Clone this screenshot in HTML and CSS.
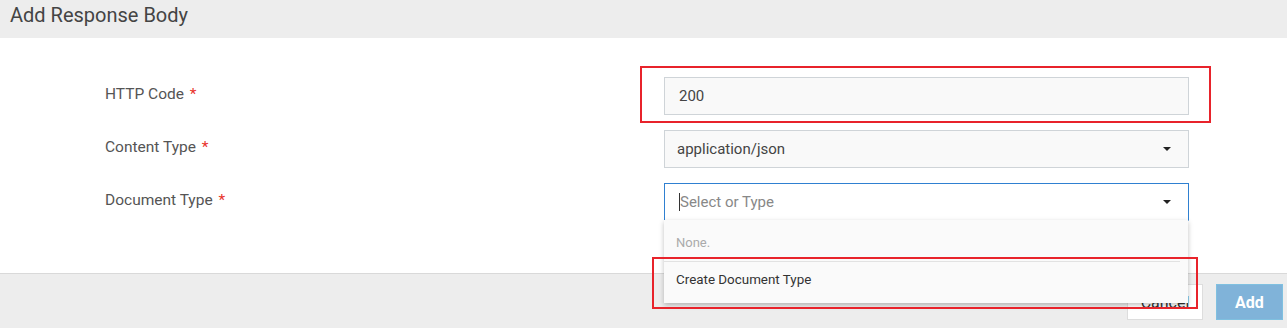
FILE: index.html
```html
<!DOCTYPE html>
<html>
<head>
<meta charset="UTF-8">
<title>Add Response Body</title>
<link rel="stylesheet" href="styles.css">
</head>
<body>
	<div class="modal">
		<div class="modalHeader">Add Response Body</div>
		<div class="modalBody">
			<div class="formRow">
				<label class="fieldLabel">HTTP Code <span class="required">*</span></label>
				<div class="field">
					<div class="textBox">200</div>
					<div class="markBox markCode"></div>
				</div>
			</div>
			<div class="formRow">
				<label class="fieldLabel">Content Type <span class="required">*</span></label>
				<div class="field">
					<div class="textBox selectBox">
						<span>application/json</span>
						<span class="caret"></span>
					</div>
				</div>
			</div>
			<div class="formRow">
				<label class="fieldLabel">Document Type <span class="required">*</span></label>
				<div class="field">
					<div class="textBox selectBox focused">
						<span class="placeholder"><span class="cursor"></span>Select or Type</span>
						<span class="caret"></span>
					</div>
					<div class="dropdown">
						<div class="dropItem emptyItem">None.</div>
						<div class="dropItem createItem">Create Document Type</div>
					</div>
					<div class="markBox markCreate"></div>
				</div>
			</div>
		</div>
		<div class="modalFooter">
			<button class="btn btnCancel">Cancel</button>
			<button class="btn btnAdd">Add</button>
		</div>
	</div>
</body>
</html>
```

FILE: styles.css
```css
body {
	margin: 0px;
	font-family: Roboto, "Liberation Sans", sans-serif;
	background-color: #ededed;
	overflow: hidden;
}

.modal {
	width: 1287px;
	height: 328px;
}

.modalHeader {
	height: 38px;
	padding-left: 10px;
	line-height: 30px;
	font-size: 20px;
	color: #444;
	background-color: #ededed;
}

.modalBody {
	background-color: #fff;
	height: 196px;
	padding-top: 39px;
	border-bottom: 1px solid #d9d9d9;
	display: flex;
	flex-direction: column;
	gap: 15px;
}

.formRow {
	display: grid;
	grid-template-columns: 559px 525px;
	padding-left: 105px;
}

.fieldLabel {
	font-size: 15.5px;
	color: #555;
	padding-top: 8px;
}

.required {
	color: #e8322b;
	margin-left: 2px;
}

.field {
	position: relative;
}

.textBox {
	height: 36px;
	border: 1px solid #cfd4d8;
	background-color: #f9f9f9;
	font-size: 15px;
	color: #444;
	padding-left: 14px;
	line-height: 37px;
}

.selectBox {
	display: flex;
	justify-content: space-between;
	align-items: center;
	padding-left: 12px;
	padding-right: 17px;
}

.focused {
	background-color: #fff;
	border-color: #2f80d1;
	border-bottom-color: #e3e3e3;
	padding-left: 14px;
}

.placeholder {
	color: #888;
	display: flex;
	align-items: center;
}

.cursor {
	width: 1px;
	height: 18px;
	background-color: #333;
}

.caret {
	width: 0px;
	height: 0px;
	border-left: 4px solid transparent;
	border-right: 4px solid transparent;
	border-top: 4px solid #222;
}

.dropdown {
	position: absolute;
	top: 37px;
	left: 0px;
	width: 524px;
	background-color: #fafafa;
	box-shadow: 0px 2px 5px rgba(0, 0, 0, 0.25);
	z-index: 2;
}

.dropItem {
	font-size: 13px;
	padding-left: 12px;
}

.emptyItem {
	color: #aaa;
	height: 41px;
	line-height: 46px;
	margin-right: 8px;
	border-bottom: 1px solid #e2e2e2;
}

.createItem {
	color: #333;
	font-size: 13.4px;
	height: 41px;
	line-height: 36px;
}

.markBox {
	position: absolute;
	border: 2px solid #e8232b;
	z-index: 3;
}

.markCode {
	top: -11px;
	left: -24px;
	width: 567px;
	height: 53px;
}

.markCreate {
	top: 74px;
	left: -12px;
	width: 542px;
	height: 48px;
}

.modalFooter {
	display: flex;
	justify-content: flex-end;
	gap: 13px;
	padding-top: 10px;
	padding-right: 4px;
}

.btn {
	height: 36px;
	font-family: Roboto, "Liberation Sans", sans-serif;
	font-size: 16px;
}

.btnCancel {
	width: 76px;
	background-color: #fff;
	border: 1px solid #ddd;
	color: #333;
}

.btnAdd {
	width: 67px;
	background-color: #80b3d9;
	border: 1px solid #7fc0e0;
	color: #fff;
	font-weight: bold;
}
```
